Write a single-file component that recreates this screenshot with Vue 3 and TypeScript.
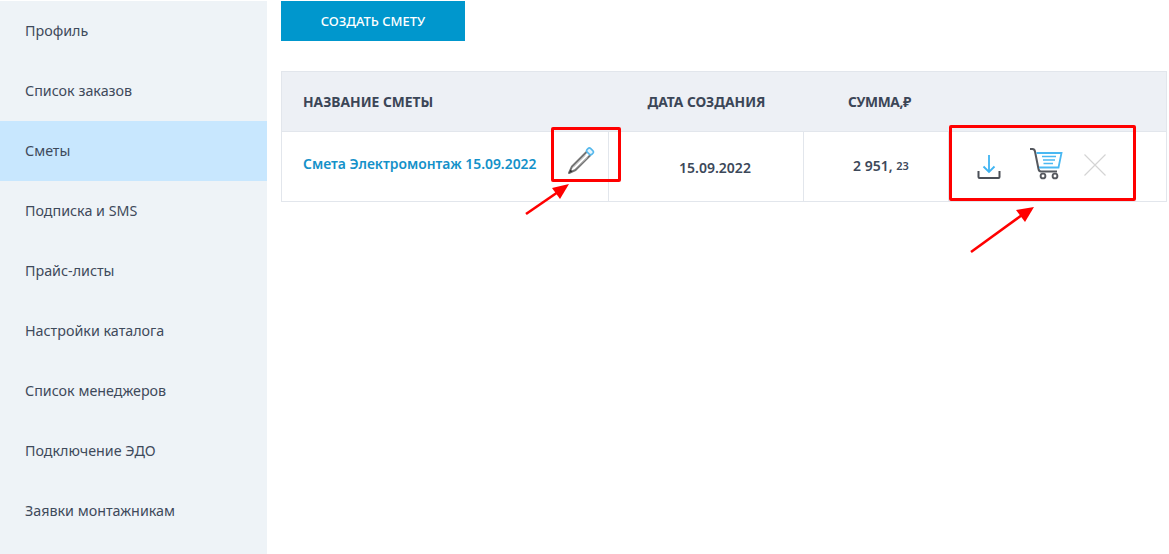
<script setup lang="ts">
const menu: string[] = ['Профиль','Список заказов','Сметы','Подписка и SMS','Прайс-листы','Настройки каталога','Список менеджеров','Подключение ЭДО','Заявки монтажникам'];
</script>

<template>
  <div class="page">
    <nav class="side">
      <a v-for="m in menu" :key="m" class="item" :class="{active: m==='Сметы'}"><span class="label">{{ m }}</span></a>
    </nav>
    <main class="main">
      <button class="create">СОЗДАТЬ СМЕТУ</button>
      <div class="table">
        <div class="row head">
          <div class="c c1"><span class="hname">НАЗВАНИЕ СМЕТЫ</span></div>
          <div class="c c2">ДАТА СОЗДАНИЯ</div>
          <div class="c c3"><span>СУММА,₽</span></div>
          <div class="c c4"></div>
        </div>
        <div class="row body">
          <div class="c c1">
            <a class="link">Смета Электромонтаж 15.09.2022</a>
            <svg class="pencil" width="28" height="28" viewBox="0 0 28 28" fill="none">
              <path d="M20 4.5 L5 19.5 L2 26 L8.5 23 L23.5 8" stroke="#737373" stroke-width="2" stroke-linejoin="round"/>
              <path d="M6 20.5 L18 8.5 M8 22 L20.5 10.5" stroke="#b0b0b0" stroke-width="1"/>
              <path d="M2 26 L3.4 22.6 L5.6 24.6 Z" fill="#333"/>
              <rect x="19.6" y="1.9" width="6.8" height="5" rx="2" transform="rotate(45 23 4.4)" fill="#e6f4fc" stroke="#55b8ec" stroke-width="1.6"/>
            </svg>
          </div>
          <div class="c c2 date">15.09.2022</div>
          <div class="c c3 sum">2 951, <small>23</small></div>
          <div class="c c4 actions">
            <svg width="24" height="26" viewBox="0 0 24 26" fill="none">
              <path d="M12 1 V18 M6.5 12.5 L12 18 L17.5 12.5" stroke="#3fb4f2" stroke-width="1.8"/>
              <path d="M1.5 17 V23 Q1.5 24 2.5 24 H21.5 Q22.5 24 22.5 23 V17" stroke="#4a4f57" stroke-width="2"/>
            </svg>
            <svg class="cart" width="34" height="32" viewBox="0 0 34 32" fill="none">
              <path d="M1 1 H3.5 Q5.5 1 6 3.5 L9.5 21 Q10 23.5 12 23.5 H28" stroke="#55585e" stroke-width="2"/>
              <path d="M7.5 5 H32.5 L29.5 19.5 H10" stroke="#4ab8f2" stroke-width="1.8"/>
              <path d="M13 8.5 H27 M14 12 H26 M14.5 15.5 H24" stroke="#4ab8f2" stroke-width="1.6"/>
              <circle cx="14" cy="28" r="2.4" stroke="#55585e" stroke-width="1.9"/>
              <circle cx="26" cy="28" r="2.4" stroke="#55585e" stroke-width="1.9"/>
            </svg>
            <svg class="x" width="24" height="24" viewBox="0 0 24 24" fill="none">
              <path d="M1.5 1.5 L22.5 22.5 M22.5 1.5 L1.5 22.5" stroke="#d4d4d4" stroke-width="1.1"/>
            </svg>
          </div>
        </div>
      </div>
    </main>

    <div class="mark m1"></div>
    <div class="mark m2"></div>
    <svg class="arrows" width="1169" height="554" viewBox="0 0 1169 554" fill="none">
      <path d="M526 214 L558 192" stroke="#f00" stroke-width="2.6"/>
      <path d="M569 184 L552 188 L560 199 Z" fill="#f00"/>
      <path d="M971 252 L1022 215" stroke="#f00" stroke-width="2.6"/>
      <path d="M1034 207 L1016 210 L1025 222 Z" fill="#f00"/>
    </svg>
  </div>
</template>

<style>
html, body { margin: 0; background: #fff; }
</style>

<style scoped>
.page {
  position: relative;
  width: 1169px;
  height: 554px;
  overflow: hidden;
  display: flex;
  font-family: "Noto Sans", "Open Sans", sans-serif;
  color: #3c4859;
  background: #fff;
}
.side {
  width: 267px;
  margin-top: 1px;
  background: #eef3f7;
  display: flex;
  flex-direction: column;
  flex: none;
}
.item {
  height: 60px;
  flex: none;
  display: flex;
  align-items: center;
  padding-left: 25px;
  font-size: 14.3px;
  color: #3e4a5b;
}
.label { margin-top: -2px; }
.item.active { background: #c8e7fe; }
.main {
  padding: 1px 2px 0 14px;
  flex: 1;
  display: flex;
  flex-direction: column;
  align-items: flex-start;
}
.create {
  width: 184px;
  height: 40px;
  border: 0;
  background: #0097cd;
  color: #fff;
  font: 500 13px "Noto Sans", sans-serif;
  padding: 0;
}
.table {
  margin-top: 30px;
  width: 886px;
  border: 1px solid #e2e6ec;
  box-sizing: border-box;
}
.row { display: flex; }
.head {
  height: 59px;
  background: #edf0f5;
  border-bottom: 1px solid #e2e6ec;
  font-weight: 700;
  font-size: 13.8px;
  color: #3b4657;
  box-sizing: content-box;
}
.head .c3 span { letter-spacing: -0.4px; margin-left: -2px; }
.body { height: 69px; }
.c { display: flex; align-items: center; box-sizing: border-box; }
.c1 { width: 327px; padding-left: 21px; }
.c2 { width: 195px; justify-content: center; }
.c3 { width: 145px; justify-content: center; padding-left: 8px; }
.c4 { flex: 1; }
.body .c1, .body .c2, .body .c3 { border-right: 1px solid #e2e6ec; }
.link {
  color: #1491c9;
  font-weight: 600;
  font-size: 13.9px;
  white-space: pre;
  margin-top: -6px;
}
.pencil { margin-left: 31px; margin-top: -12px; }
.date { font-weight: 600; font-size: 14px; padding-top: 2px; padding-left: 18px; }
.sum { font-weight: 600; font-size: 14px; white-space: pre; padding-bottom: 3px; padding-left: 10px; }
.sum small { font-size: 11px; }
.actions { padding-left: 28px; padding-top: 1px; }
.cart { margin-left: 28px; margin-top: -6px; }
.x { margin-left: 20px; margin-top: -4px; }
.mark {
  position: absolute;
  border: 3px solid #f00;
  border-radius: 2px;
  box-sizing: border-box;
}
.m1 { left: 551px; top: 127px; width: 70px; height: 55px; }
.m2 { left: 949px; top: 125px; width: 187px; height: 76px; }
.arrows { position: absolute; left: 0; top: 0; pointer-events: none; }
</style>
